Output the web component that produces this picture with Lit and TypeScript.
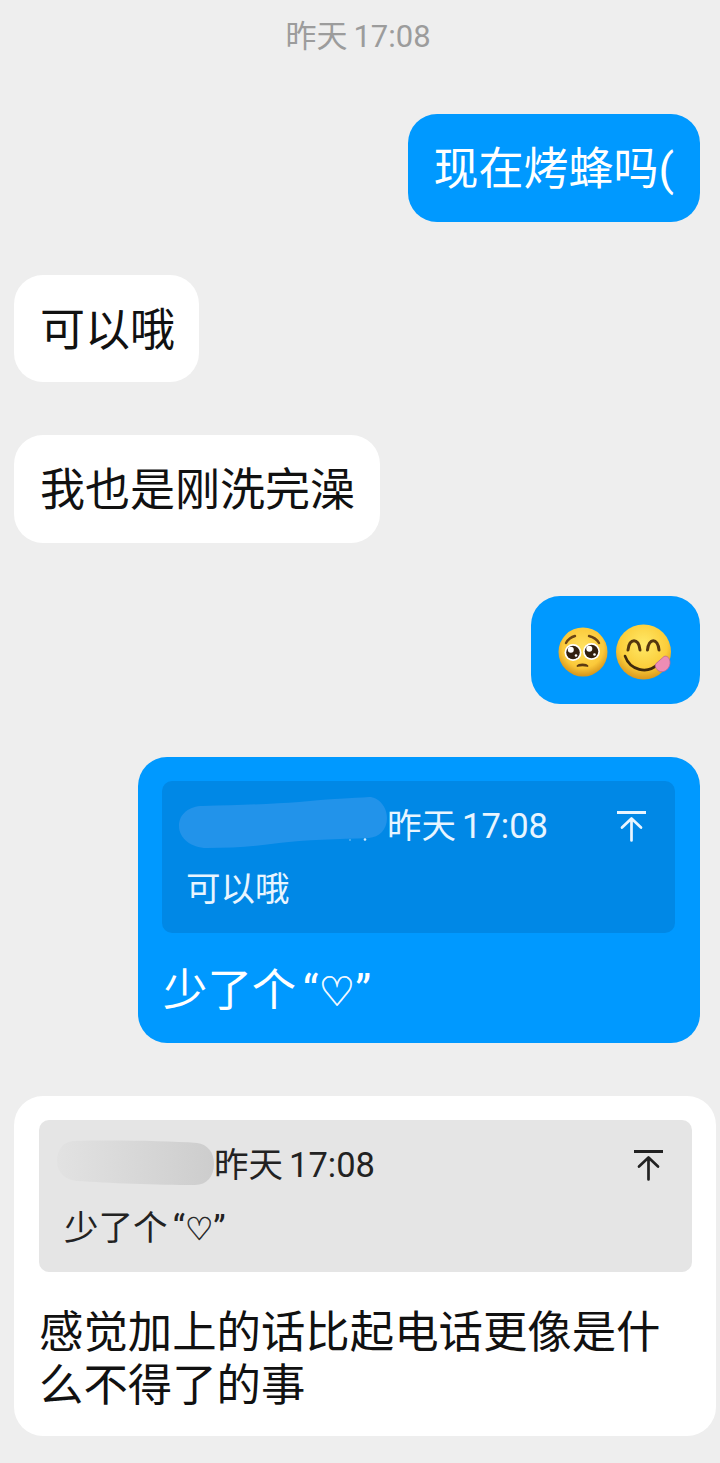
import { LitElement, html, css, svg } from 'lit';
import { customElement, property } from 'lit/decorators.js';

const FONT = css`'Roboto', 'Noto Sans CJK SC', sans-serif`;

// 引用文字里的爱心
const heartStyles = css`
  .lq {
    margin-left: 0.15em;
  }

  .heart {
    font-family: 'DejaVu Sans', sans-serif;
    font-size: 0.92em;
    line-height: 1;
    -webkit-text-stroke: 0.5px currentColor;
  }
`;

const heartLine = html`少了个<span class="lq">“</span><span class="heart">♡</span>”`;

// 置顶箭头
const arrowIcon = html`
  <svg class="arrow" viewBox="0 0 29 31" fill="none" stroke="currentColor" stroke-linecap="round" stroke-linejoin="round">
    <path d="M0 1.5H29" stroke-width="3" stroke-linecap="butt" />
    <path d="M14.500 7.500V29.500M5 16.500L14.500 7.500L24 16.500" stroke-width="2.700" />
  </svg>
`;

const pleadingEmoji = svg`
  <svg class="face" width="50" height="50" viewBox="0 0 50 50">
    <defs>
      <radialGradient id="pf" cx="50%" cy="40%" r="58%">
        <stop offset="0%" stop-color="#ffe15f" />
        <stop offset="72%" stop-color="#fbc93a" />
        <stop offset="100%" stop-color="#d9991e" />
      </radialGradient>
    </defs>
    <circle cx="25" cy="25" r="24.500" fill="url(#pf)" />
    <path d="M8 16C10 12.500 13 10 17 9M31 9C35 10 39 12.500 41 16" fill="none" stroke="#6b4516" stroke-width="2.400" stroke-linecap="round" />
    <circle cx="15" cy="25.500" r="8.500" fill="#fff" />
    <circle cx="33.500" cy="24.500" r="8.500" fill="#fff" />
    <circle cx="15" cy="25.500" r="6.800" fill="#33200f" />
    <circle cx="33.500" cy="24.500" r="6.800" fill="#33200f" />
    <circle cx="12.800" cy="22.800" r="3" fill="#fff" />
    <circle cx="31.300" cy="21.800" r="3" fill="#fff" />
    <circle cx="18" cy="28.500" r="1.300" fill="#fff" />
    <circle cx="36.500" cy="27.500" r="1.300" fill="#fff" />
    <path d="M19.500 39C21 36.800 28 36.800 29.500 39C27 38.300 22 38.300 19.500 39Z" fill="#5b3a12" stroke="#5b3a12" stroke-width="1.800" stroke-linejoin="round" />
  </svg>
`;

const yumEmoji = svg`
  <svg class="face" width="58" height="58" viewBox="0 0 58 58">
    <defs>
      <radialGradient id="yf" cx="50%" cy="36%" r="64%">
        <stop offset="0%" stop-color="#ffe968" />
        <stop offset="68%" stop-color="#fbcd3a" />
        <stop offset="100%" stop-color="#d9971c" />
      </radialGradient>
    </defs>
    <circle cx="29.500" cy="29" r="27.500" fill="url(#yf)" />
    <path d="M14 27C15 14.500 25 14.500 26 27M33.500 27C34.500 14.500 44 14.500 45 27" fill="none" stroke="#54360f" stroke-width="3" stroke-linecap="round" />
    <path d="M11 33C16 47 33 52 44 41" fill="none" stroke="#3f290c" stroke-width="2.600" stroke-linecap="round" />
    <path d="M41.500 41L50 33.500C53 32 56.500 35.500 56 40.500C55.500 45.500 51 49.500 46.500 48.500C43 47.700 40.500 44 41.500 41Z" fill="#ee8db4" stroke="#b9679a" stroke-width="0.800" />
  </svg>
`;

@customElement('reply-card')
export class ReplyCard extends LitElement {
  @property({ type: Boolean }) sent = false;

  static styles = [
    heartStyles,
    css`
      :host {
        display: block;
        font-family: ${FONT};
      }

      .quote {
        height: 152px;
        box-sizing: border-box;
        padding: 20px 29px 19px 25px;
        border-radius: 10px;
        background: #e5e5e5;
        color: #222;
        font-size: 34.5px;
        line-height: 50px;
      }

      .sent .quote {
        padding-left: 26px;
        background: #0088e6;
        color: #e8f5ff;
      }

      .sent .body {
        margin-left: -2px;
      }

      .head {
        display: flex;
        align-items: center;
        height: 50px;
        margin-bottom: 13px;
      }

      .smudge {
        flex: none;
        align-self: flex-start;
        margin-left: -7px;
      }

      .sent .smudge {
        margin-left: -9px;
        margin-top: -4px;
      }

      .day {
        margin-right: 6px;
      }

      .arrow {
        flex: none;
        width: 29px;
        height: 31px;
        margin-left: auto;
        margin-top: 1px;
      }
    `,
  ];

  render() {
    return html`
      <div class=${this.sent ? 'sent' : ''}>
        <div class="quote">
          <div class="head">
            ${this.sent ? this.blueSmudge() : this.graySmudge()}
            <span class="day">昨天</span><span>17:08</span>
            ${arrowIcon}
          </div>
          <div class="body"><slot></slot></div>
        </div>
      </div>
    `;
  }

  blueSmudge() {
    return html`
      <svg class="smudge" width="208" height="52" viewBox="0 0 208 52">
        <path d="M24 9C60 8 95 7 120 5C150 2 175 1 190 0C200 0 208 10 208 21C208 33 200 40 190 41C160 42 125 43 100 46C80 49 55 51 28 51C12 51 0 41 0 29C0 17 10 9 24 9Z" fill="#2293ea" />
        <circle cx="186" cy="42.500" r="1.300" fill="#cfeaff" />
        <circle cx="171" cy="43" r="0.800" fill="#8ccaf7" />
      </svg>
    `;
  }

  graySmudge() {
    return html`
      <svg class="smudge" width="157" height="46" viewBox="0 0 157 46">
        <defs>
          <linearGradient id="gs" x1="0" x2="1" y1="0" y2="0">
            <stop offset="0%" stop-color="#e2e2e2" />
            <stop offset="100%" stop-color="#cdcdcd" />
          </linearGradient>
        </defs>
        <path d="M16 1C60 0 110 1 140 3C150 4 157 12 157 24C157 36 150 45 138 45C100 45 50 43 20 41C8 40 0 32 0 21C0 10 6 2 16 1Z" fill="url(#gs)" />
      </svg>
    `;
  }
}

@customElement('app-root')
export class AppRoot extends LitElement {
  static styles = [
    heartStyles,
    css`
      :host {
        display: block;
        min-height: 1463px;
        background: #eeeeee;
        font-family: ${FONT};
      }

      .chat {
        display: flex;
        flex-direction: column;
        gap: 53px;
        padding: 0 4px 27px 14px;
      }

      .time {
        display: flex;
        justify-content: center;
        height: 48px;
        padding: 13px 14px 0 0;
        color: #9c9c9c;
        font-size: 31px;
        line-height: 48px;
      }

      .time .day {
        margin-right: 6px;
      }

      .bubble {
        box-sizing: border-box;
        min-height: 108px;
        padding: 29px 26px 25px;
        border-radius: 29px;
        font-size: 45px;
        line-height: 54px;
      }

      .out {
        align-self: flex-end;
        margin-right: 16px;
        background: #0099ff;
        color: #fff;
      }

      .in {
        align-self: flex-start;
        padding-right: 25px;
        background: #fff;
        color: #111;
      }

      .short {
        min-height: 107px;
        padding-right: 24px;
        padding-bottom: 24px;
      }

      .emoji {
        display: flex;
        align-items: center;
        gap: 6px;
        padding: 27px 28px 23px 27px;
      }

      .face {
        filter: blur(0.3px);
      }

      .card {
        padding: 24px 25px 25px 24px;
      }

      .card p {
        margin: 32px 0 0 1px;
        font-size: 44.4px;
        line-height: 53px;
      }

      .wide {
        width: 562px;
      }

      .full {
        width: 702px;
        padding: 24px 24px 23px 25px;
      }

      .full p {
        margin: 35px 0 0;
      }
    `,
  ];

  render() {
    return html`
      <div class="chat">
        <div class="time"><span class="day">昨天</span><span>17:08</span></div>
        <div class="bubble out">现在烤蜂吗(</div>
        <div class="bubble in short">可以哦</div>
        <div class="bubble in">我也是刚洗完澡</div>
        <div class="bubble out emoji">${pleadingEmoji}${yumEmoji}</div>
        <div class="bubble out card wide">
          <reply-card sent>可以哦</reply-card>
          <p>${heartLine}</p>
        </div>
        <div class="bubble in card full">
          <reply-card>${heartLine}</reply-card>
          <p>感觉加上的话比起电话更像是什么不得了的事</p>
        </div>
      </div>
    `;
  }
}
